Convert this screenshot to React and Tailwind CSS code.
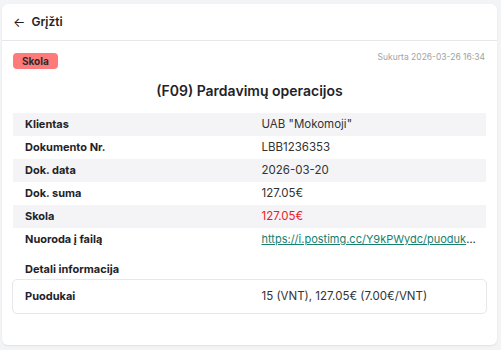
import React from "react";

const rows = [
  { label: "Klientas", value: 'UAB "Mokomoji"' },
  { label: "Dokumento Nr.", value: "LBB1236353" },
  { label: "Dok. data", value: "2026-03-20" },
  { label: "Dok. suma", value: "127.05€" },
  { label: "Skola", value: "127.05€", red: true },
  { label: "Nuoroda į failą", value: "https://i.postimg.cc/Y9kPWydc/puodukai.jpg", link: true },
];

export default function App() {
  return (
    <div
      className="min-h-screen bg-[#f3f4f6] pt-[4px] px-[2px] text-[#1f2328]"
      style={{ fontFamily: "Inter, 'Noto Sans', sans-serif" }}
    >
      <div className="bg-white rounded-md shadow-[0_1px_2px_rgba(0,0,0,0.08)] h-[341px] w-[495px]">
        <div className="h-[37px] flex items-center px-[11px] border-b border-[#e5e7eb] gap-[6px]">
          <span className="text-[13px] leading-none">←</span>
          <span className="text-[12px] font-semibold">Grįžti</span>
        </div>
        <div className="px-[11px] pt-[12px]">
          <div className="flex justify-between items-start">
            <span className="h-[16px] px-[9px] rounded-[4px] bg-[#ff7b7b] text-[10px] font-bold flex items-center text-[#2b2b2b]">
              Skola
            </span>
            <span className="text-[8.5px] text-[#a3a3a3] mr-[1px] leading-[10px] mt-[-1px]">
              Sukurta 2026-03-26 16:34
            </span>
          </div>
          <h1 className="mt-[11px] mb-[11px] text-center text-[14px] leading-[22px] font-semibold">
            (F09) Pardavimų operacijos
          </h1>
          <div>
            {rows.map((r, i) => (
              <div
                key={r.label}
                className={
                  "grid grid-cols-2 h-[23px] items-center " +
                  (i % 2 === 0 ? "bg-[#f4f4f6]" : "bg-white")
                }
              >
                <div className="px-3 font-bold text-[11px]">{r.label}</div>
                {r.link ? (
                  <div className="pl-3 pr-[8px] truncate text-[11px]">
                    <span className="underline text-[#18806d]">{r.value}</span>
                  </div>
                ) : (
                  <div className="px-3 truncate text-[11.5px]">
                    <span className={r.red ? "text-[#ef1c1c]" : "text-[#333]"}>{r.value}</span>
                  </div>
                )}
              </div>
            ))}
          </div>
          <div className="px-3 mt-[9px] h-[18px] flex items-center text-[11px] font-bold">
            Detali informacija
          </div>
          <div className="mt-[1px] mx-[-1px] h-[35px] border border-[#e5e7eb] rounded-[5px] grid grid-cols-2 items-center">
            <div className="px-3 font-bold text-[11px]">Puodukai</div>
            <div className="px-3 text-[#333] text-[11.5px]">15 (VNT), 127.05€ (7.00€/VNT)</div>
          </div>
        </div>
      </div>
    </div>
  );
}
